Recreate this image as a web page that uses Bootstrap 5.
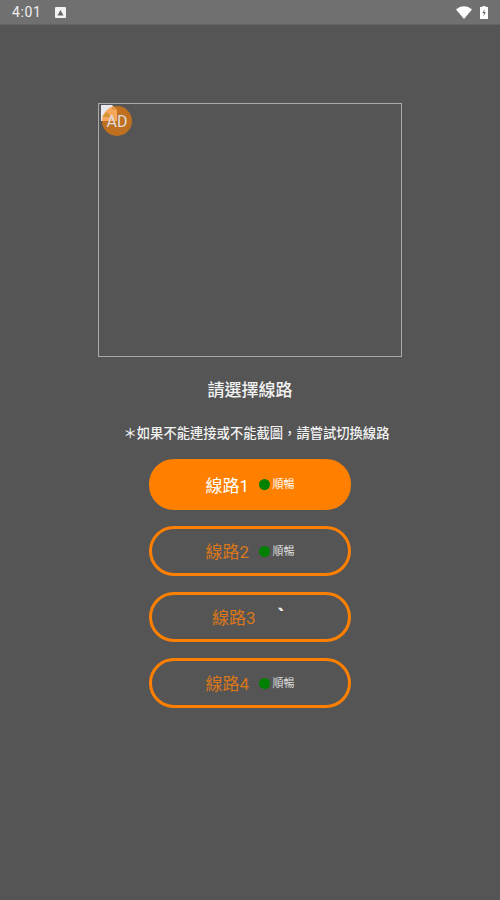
<!DOCTYPE html>
<html lang="zh-Hant">
<head>
<meta charset="utf-8">
<title>線路</title>
<link href="https://cdn.jsdelivr.net/npm/bootstrap@5.3.0/dist/css/bootstrap.min.css" rel="stylesheet">
<style>
html,body{height:100%}
body{background:#555;font-family:Roboto,"Noto Sans CJK SC",sans-serif;color:#fff;overflow:hidden}
.sbar{height:25px;background:#707070;border-bottom:1px solid #666;padding:0 12px 0 12px;color:#eee}
.sbar-time{font-size:14px;line-height:24px;letter-spacing:.6px}
.sbar-a{margin-left:14px;margin-top:1px}
.ad-box{width:304px;height:254px;margin-top:78px;border:1px solid #aaa;position:relative}
.ad-broken{position:absolute;left:2px;top:1px}
.ad-badge{position:absolute;left:3px;top:2px;width:30px;height:30px;border-radius:50%;background:rgba(255,128,0,.62);color:#ddd;font-size:16px;line-height:32px;text-align:center}
.pick-title{font-size:17px;line-height:22px;font-weight:500;margin-top:22px;color:#f2f2f2}
.pick-note{font-size:13.300px;line-height:18px;font-weight:500;margin-top:24px;margin-left:13px;color:#f2f2f2;white-space:nowrap}
.route-list{margin-top:16px;gap:16px;width:202px}
.route-btn{height:50px;border-radius:25px;border:3px solid #ff8000;background:transparent;color:#d9771a;font-size:17px;padding:0;line-height:24px}
.route-btn:hover,.route-btn:active{border-color:#ff8000;color:#d9771a}
.route-on,.route-on:hover{background:#ff8000;color:#fff;height:51px}
.route-name{width:42px;white-space:nowrap;padding-top:2px}
.route-dot{width:11px;height:11px;border-radius:50%;background:#008000;margin-left:11px}
.route-state{font-size:11px;color:#ddd;margin-left:3px;width:22px;text-align:left;line-height:12px;white-space:nowrap;padding-top:1px}
.route-on .route-state{color:#fff}
.route-tick{font-size:22px;font-weight:700;color:#eee;margin-left:20px;width:14px;line-height:14px;position:relative;top:0}
</style>
</head>
<body>
<div class="sbar d-flex align-items-center justify-content-between">
  <div class="d-flex align-items-center">
    <span class="sbar-time">4:01</span>
    <svg class="sbar-a" width="11" height="11" viewBox="0 0 11 11"><rect width="11" height="11" rx="1" fill="#f2f2f2"/><path d="M2.500 8.500 5.500 3l3 5.500z" fill="#666"/></svg>
  </div>
  <div class="d-flex align-items-center gap-2">
    <svg width="16" height="13" viewBox="0 0 16 13"><path d="M0 3.500C4.500-1 11.500-1 16 3.500L8 13z" fill="#fff"/></svg>
    <svg width="8" height="13" viewBox="0 0 8 13"><path d="M2.500 0h3v1H8v12H0V1h2.500z" fill="#fff"/><path d="M4.500 3 2.500 7.200h1.500L3.500 10.500 5.700 6H4.200z" fill="#666"/></svg>
  </div>
</div>
<main class="d-flex flex-column align-items-center">
  <div class="ad-box">
    <svg class="ad-broken" width="16" height="16" viewBox="0 0 16 16"><path d="M0 0h11l5 5v11H0z" fill="#e8e8ee"/><path d="M11 0v5h5z" fill="#bbb"/><path d="M1 12 6 7l4 5z" fill="#8ab57a"/></svg>
    <div class="ad-badge">AD</div>
  </div>
  <div class="pick-title">請選擇線路</div>
  <div class="pick-note">＊如果不能連接或不能截圖，請嘗試切換線路</div>
  <div class="route-list d-flex flex-column">
    <button type="button" class="btn route-btn route-on d-flex align-items-center justify-content-center"><span class="route-name">線路1</span><span class="route-dot"></span><span class="route-state">順暢</span></button>
    <button type="button" class="btn route-btn d-flex align-items-center justify-content-center"><span class="route-name">線路2</span><span class="route-dot"></span><span class="route-state">順暢</span></button>
    <button type="button" class="btn route-btn d-flex align-items-center justify-content-center"><span class="route-name">線路3</span><span class="route-tick">`</span></button>
    <button type="button" class="btn route-btn d-flex align-items-center justify-content-center"><span class="route-name">線路4</span><span class="route-dot"></span><span class="route-state">順暢</span></button>
  </div>
</main>
</body>
</html>
